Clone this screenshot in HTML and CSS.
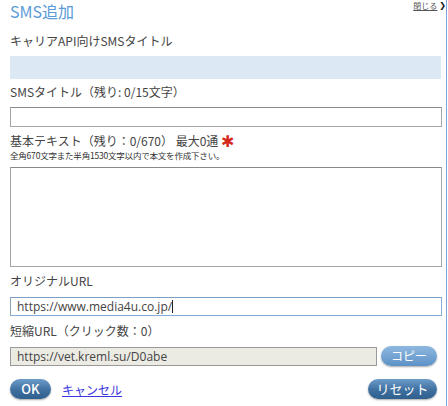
FILE: index.html
```html
<!DOCTYPE html>
<html lang="ja">
<head>
<meta charset="utf-8">
<link rel="stylesheet" href="styles.css">
</head>
<body>
<div class="dialog">
  <div class="header">
    <h1 class="title">SMS追加</h1>
    <div class="close"><a href="#" class="close-link">閉じる</a><span class="close-mark">❯</span></div>
  </div>
  <div class="label l1">キャリアAPI向けSMSタイトル</div>
  <div class="carrier-bar"></div>
  <div class="label l2">SMSタイトル（残り: 0/15文字）</div>
  <input class="field f-title" type="text" value="">
  <div class="label l3">基本テキスト（残り：0/670） 最大0通 <span class="req">✱</span></div>
  <div class="note">全角670文字また半角1530文字以内で本文を作成下さい。</div>
  <textarea class="area"></textarea>
  <div class="label l4">オリジナルURL</div>
  <div class="field f-url focus">https://www.media4u.co.jp/<span class="caret"></span></div>
  <div class="label l5">短縮URL（クリック数：0）</div>
  <div class="short-row">
    <div class="field readonly">https://vet.kreml.su/D0abe</div>
    <button class="btn btn-light btn-copy">コピー</button>
  </div>
  <div class="actions">
    <div class="left-actions">
      <button class="btn btn-dark btn-ok">OK</button>
      <a href="#" class="cancel">キャンセル</a>
    </div>
    <button class="btn btn-dark btn-reset">リセット</button>
  </div>
</div>
</body>
</html>
```
FILE: styles.css
```css
html, body {
  margin: 0;
  padding: 0;
  background: #fff;
}
body {
  font-family: "Noto Sans CJK JP", "Open Sans", sans-serif;
  color: #444;
  font-size: 12px;
}
.dialog {
  box-sizing: border-box;
  width: 447px;
  height: 406px;
  border-right: 1px solid #7ba4da;
  padding: 0 4px 0 10px;
  display: flex;
  flex-direction: column;
}
.header {
  display: flex;
  justify-content: space-between;
  align-items: flex-start;
  height: 22px;
}
.title {
  margin: 0;
  font-size: 16px;
  font-weight: normal;
  line-height: 22px;
  color: #5a9ad6;
  font-family: "Noto Sans CJK JP", "Open Sans", sans-serif;
}
.close {
  display: flex;
  align-items: flex-start;
  margin-right: -4px;
  line-height: 10px;
}
.close-link {
  font-size: 8px;
  color: #555;
  text-decoration: underline;
  margin-top: 1px;
}
.close-mark {
  font-size: 8px;
  color: #111;
  font-weight: bold;
  margin-left: 2px;
  margin-top: 1px;
  font-family: "DejaVu Sans", sans-serif;
}
.label {
  line-height: 18px;
  font-size: 12px;
  white-space: nowrap;
}
.l1 { margin-top: 10px; }
.carrier-bar {
  height: 23px;
  margin-top: 6px;
  margin-right: 1px;
  background: #dce8f3;
}
.l2 { margin-top: 4px; }
.field {
  box-sizing: border-box;
  width: 100%;
  border: 1px solid #a5a5a5;
  border-top-color: #8a8a8a;
  background: #fff;
  font-family: "Open Sans", "Noto Sans CJK JP", sans-serif;
  font-size: 12px;
  color: #444;
  padding: 0 6px;
  margin: 0;
  display: block;
}
.f-title {
  height: 20px;
  margin-top: 6px;
}
.l3 {
  margin-top: 7px;
  line-height: 14px;
}
.req {
  color: #d42a1e;
  font-size: 16px;
  line-height: 14px;
  font-weight: bold;
  font-family: "DejaVu Sans", sans-serif;
  vertical-align: -1px;
}
.note {
  font-size: 8.5px;
  line-height: 12px;
  color: #333;
  letter-spacing: -0.2px;
}
.area {
  box-sizing: border-box;
  display: block;
  width: 100%;
  height: 100px;
  margin-top: 6px;
  border: 1px solid #a5a5a5;
  border-top-color: #8a8a8a;
  resize: none;
  padding: 0;
}
.l4 { margin-top: 5px; }
.f-url {
  height: 19px;
  line-height: 17px;
  margin-top: 7px;
  border-color: #86acd6;
  border-top-color: #7d9fc6;
  border-left-color: #8fa3b8;
}
.caret {
  display: inline-block;
  width: 1px;
  height: 13px;
  background: #222;
  vertical-align: -2px;
}
.l5 { margin-top: 6px; }
.short-row {
  display: flex;
  align-items: center;
  gap: 4px;
  margin-top: 6px;
}
.readonly {
  width: 367px;
  height: 19px;
  line-height: 17px;
  background: #ebebe4;
  border-color: #9a9a9a;
  flex: none;
}
.btn {
  border: none;
  color: #fff;
  font-family: "Noto Sans CJK JP", "Open Sans", sans-serif;
  border-radius: 10px;
  height: 20px;
  padding: 0;
  line-height: 20px;
  box-shadow: 0 1px 2px rgba(0, 0, 0, 0.35);
  margin: 0;
}
.btn-light {
  background: linear-gradient(#8fb8e0, #5d92c7);
  font-size: 12px;
}
.btn-dark {
  background: linear-gradient(#6c9cc9, #3e6f9f 55%, #2f5f8d);
  font-size: 13px;
}
.btn-copy {
  width: 56px;
  margin-left: 0;
}
.actions {
  display: flex;
  justify-content: space-between;
  align-items: center;
  margin-top: 13px;
  padding-right: 5px;
}
.left-actions {
  display: flex;
  align-items: center;
}
.btn-ok {
  width: 41px;
  font-weight: 500;
}
.btn-reset {
  width: 69px;
}
.cancel {
  margin-left: 11px;
  color: #3a36e0;
  text-decoration: underline;
  font-size: 12px;
}
```
